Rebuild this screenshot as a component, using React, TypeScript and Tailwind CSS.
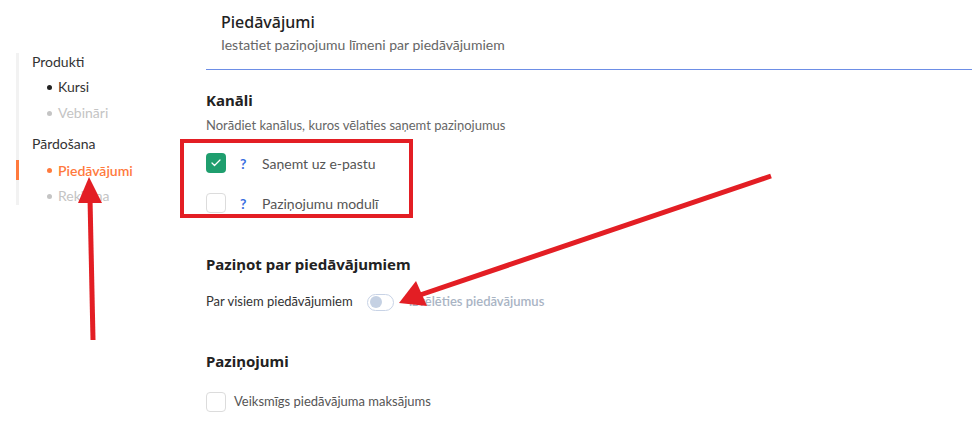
import { Check } from 'lucide-react';

const body = { fontFamily: 'Lato, "Noto Sans", sans-serif' };
const head = { fontFamily: '"Noto Sans", "Open Sans", sans-serif' };

function Box({ checked }: { checked?: boolean }) {
  return checked ? (
    <span className="flex h-5 w-5 items-center justify-center rounded-[4px] bg-[#1f9e6e]">
      <Check className="h-3 w-3 text-white" strokeWidth={2.5} />
    </span>
  ) : (
    <span className="h-5 w-5 rounded-[4px] border border-[#dcdcdc] bg-white" />
  );
}

export default function App() {
  return (
    <div className="relative h-[427px] w-[972px] overflow-hidden bg-white text-[#333]" style={body}>
      <div className="flex">
        {/* Sidebar */}
        <aside className="w-[206px] shrink-0 pl-4 pt-[53px]">
          <div className="flex h-[152px] flex-col border-l-[3px] border-[#f2f2f2] text-[14px]">
            <div className="h-[18px] pl-[13px] leading-[18px]">Produkti</div>
            <div className="mt-[7px] flex h-[18px] items-center pl-[28px] leading-[18px]">
              <span className="mr-[6px] h-[5px] w-[5px] rounded-full bg-[#222]" />
              Kursi
            </div>
            <div className="mt-[8px] flex h-[18px] items-center pl-[28px] leading-[18px] text-[#c4c4c4]">
              <span className="mr-[6px] h-[5px] w-[5px] rounded-full bg-[#c4c4c4]" />
              Vebināri
            </div>
            <div className="mt-[13px] h-[18px] pl-[13px] leading-[18px]">Pārdošana</div>
            <div className="-ml-[3px] mt-[7px] flex h-[20px] items-center border-l-[3px] border-[#ff7a3d] pl-[28px] font-semibold text-[#ff7a3d]">
              <span className="mr-[6px] h-[5px] w-[5px] rounded-full bg-[#ff7a3d]" />
              Piedāvājumi
            </div>
            <div className="mt-[7px] flex h-[18px] items-center pl-[28px] leading-[18px] text-[#c4c4c4]">
              <span className="mr-[6px] h-[5px] w-[5px] rounded-full bg-[#c4c4c4]" />
              Reklāma
            </div>
          </div>
        </aside>

        {/* Main */}
        <main className="flex-1">
          <div className="border-b border-[#6d8ee6] pb-[15px] pl-[15px] pt-[11px]">
            <div className="text-[16px] font-medium leading-[22px] text-[#222]" style={head}>Piedāvājumi</div>
            <div className="mt-[3px] text-[14px] leading-[18px] text-[#666]">
              Iestatiet paziņojumu līmeni par piedāvājumiem
            </div>
          </div>

          <div className="mt-[20px] text-[15px] font-bold leading-[20px] text-[#222]" style={head}>Kanāli</div>
          <div className="mt-[6px] text-[13px] leading-[18px] text-[#666]">
            Norādiet kanālus, kuros vēlaties saņemt paziņojumus
          </div>

          <div className="mt-[19px] flex h-5 items-center text-[14px]">
            <Box checked />
            <span className="ml-[14px] w-[22px] font-bold text-[#3b6fe0]">?</span>
            <span className="text-[#555]">Saņemt uz e-pastu</span>
          </div>
          <div className="mt-[20px] flex h-5 items-center text-[14px]">
            <Box />
            <span className="ml-[14px] w-[22px] font-bold text-[#3b6fe0]">?</span>
            <span className="text-[#555]">Paziņojumu modulī</span>
          </div>

          <div className="mt-[41px] text-[15px] font-bold leading-[20px] text-[#222]" style={head}>
            Paziņot par piedāvājumiem
          </div>
          <div className="mt-[18px] flex h-5 items-center text-[13px]">
            <span className="text-[#333]">Par visiem piedāvājumiem</span>
            <span className="ml-[14px] flex h-[17px] w-[27px] items-center rounded-full border border-[#c8d3e6] bg-white pl-[2px]">
              <span className="h-[12px] w-[12px] rounded-full bg-[#c5d1e3]" />
            </span>
            <span className="ml-[15px] font-semibold text-[#a9b4c4]">Izvēlēties piedāvājumus</span>
          </div>

          <div className="mt-[39px] text-[15px] font-bold leading-[20px] text-[#222]" style={head}>Paziņojumi</div>
          <div className="mt-[21px] flex h-5 items-center text-[13px]">
            <Box />
            <span className="ml-[8px] text-[#555]">Veiksmīgs piedāvājuma maksājums</span>
          </div>
        </main>
      </div>

      {/* annotations */}
      <svg className="pointer-events-none absolute inset-0" width="972" height="427" viewBox="0 0 972 427">
        <rect x="182" y="141" width="229" height="75" fill="none" stroke="#e31e24" strokeWidth="4" />
        <line x1="93" y1="340" x2="90" y2="198" stroke="#e31e24" strokeWidth="5" />
        <polygon points="89,177 78,203 102,203" fill="#e31e24" />
        <line x1="771" y1="176" x2="420" y2="295" stroke="#e31e24" strokeWidth="5" />
        <polygon points="399,303 416,281 427,306" fill="#e31e24" />
      </svg>
    </div>
  );
}
